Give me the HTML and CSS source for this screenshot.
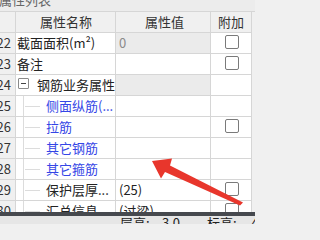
FILE: index.html
```html
<!DOCTYPE html>
<html>
<head>
<meta charset="utf-8">
<link rel="stylesheet" href="styles.css">
</head>
<body>
<div class="page">
  <div class="title"><span class="title-text">属性列表</span></div>
  <div class="grid">
    <div class="row head">
      <div class="c num"></div>
      <div class="c name center">属性名称</div>
      <div class="c val center">属性值</div>
      <div class="c att center">附加</div>
    </div>
    <div class="row">
      <div class="c num">22</div>
      <div class="c name">截面面积(m²)</div>
      <div class="c val ro muted">0</div>
      <div class="c att"><span class="cb"></span></div>
    </div>
    <div class="row">
      <div class="c num">23</div>
      <div class="c name">备注</div>
      <div class="c val"></div>
      <div class="c att"><span class="cb"></span></div>
    </div>
    <div class="row">
      <div class="c num">24</div>
      <div class="c name"><span class="toggle"></span><span class="grp">钢筋业务属性</span></div>
      <div class="c val ro"></div>
      <div class="c att"></div>
    </div>
    <div class="row">
      <div class="c num">25</div>
      <div class="c name"><span class="tree"></span><span class="blue">侧面纵筋(...</span></div>
      <div class="c val"></div>
      <div class="c att"></div>
    </div>
    <div class="row">
      <div class="c num">26</div>
      <div class="c name"><span class="tree"></span><span class="blue">拉筋</span></div>
      <div class="c val"></div>
      <div class="c att"><span class="cb"></span></div>
    </div>
    <div class="row">
      <div class="c num">27</div>
      <div class="c name"><span class="tree"></span><span class="blue">其它钢筋</span></div>
      <div class="c val"></div>
      <div class="c att"></div>
    </div>
    <div class="row">
      <div class="c num">28</div>
      <div class="c name"><span class="tree"></span><span class="blue">其它箍筋</span></div>
      <div class="c val"></div>
      <div class="c att"></div>
    </div>
    <div class="row">
      <div class="c num">29</div>
      <div class="c name"><span class="tree"></span><span>保护层厚...</span></div>
      <div class="c val">(25)</div>
      <div class="c att"><span class="cb"></span></div>
    </div>
    <div class="row">
      <div class="c num">30</div>
      <div class="c name"><span class="tree"></span><span>汇总信息</span></div>
      <div class="c val">(过梁)</div>
      <div class="c att"><span class="cb"></span></div>
    </div>
  </div>
  <div class="status">
    <div class="status-line"></div>
    <div class="status-body">
      <span class="s-label">层高:</span><span class="s-val">3.0</span><span class="s-label s2">标高:</span><span class="s-val s4">-4.2</span>
    </div>
  </div>
  <svg class="arrow" width="255" height="224" viewBox="0 0 255 224">
    <polygon points="152,161 172,158.5 170,165.5 243,202.5 240,205.5 165,172 161,178.5" fill="#e8362c"/>
  </svg>
</div>
</body>
</html>
```

FILE: styles.css
```css
html, body {
  margin: 0;
  padding: 0;
}
body {
  width: 255px;
  height: 224px;
  overflow: hidden;
  background: #f0f0f0;
  font-family: "Noto Sans CJK SC", "Noto Sans", sans-serif;
  font-size: 13px;
  color: #222;
}
.page {
  position: relative;
  width: 255px;
  height: 224px;
  overflow: hidden;
  display: flex;
  flex-direction: column;
}
.title {
  height: 11px;
  overflow: hidden;
  background: #ececec;
  color: #666;
  flex: none;
}
.title-text {
  display: block;
  line-height: 13px;
  margin-top: -7px;
  margin-left: -1px;
}
.grid {
  height: 201px;
  overflow: hidden;
  flex: none;
  margin-left: -5px;
  border-top: 1px solid #d6d6d6;
  box-sizing: border-box;
}
.row {
  display: grid;
  grid-template-columns: 21px 100px 95px 41px;
  height: 21px;
}
.row.head {
  height: 21px;
  background: #f0f0f0;
  color: #333;
}
.c {
  box-sizing: border-box;
  border-right: 1px solid #d6d6d6;
  border-bottom: 1px solid #d6d6d6;
  display: flex;
  align-items: center;
  line-height: 20px;
  white-space: nowrap;
  overflow: hidden;
  background: #fff;
}
.head .c {
  background: #f0f0f0;
}
.c.center {
  justify-content: center;
}
.num {
  background: #f0f0f0;
  justify-content: flex-end;
  padding-right: 4px;
  color: #333;
}
.name {
  padding-left: 1px;
}
.val {
  padding-left: 3px;
}
.ro {
  background: #ebebeb;
}
.muted {
  color: #8a8a8a;
}
.att {
  justify-content: center;
}
.cb {
  display: block;
  width: 12px;
  height: 12px;
  border: 1px solid #7a7a7a;
  border-radius: 2px;
  background: #fff;
  margin-left: 1px;
  margin-top: -2px;
}
.toggle {
  display: block;
  position: relative;
  width: 9px;
  height: 9px;
  border: 1px solid #8a8a8a;
  border-radius: 1px;
  margin-left: 1px;
  margin-top: -3px;
  flex: none;
  background: #fff;
}
.toggle::after {
  content: "";
  position: absolute;
  left: 2px;
  right: 2px;
  top: 4px;
  height: 1px;
  background: #444;
}
.grp {
  margin-left: 8px;
}
.tree {
  display: block;
  flex: none;
  width: 16px;
  height: 21px;
  margin-left: 6px;
  border-left: 1px solid #dcdcdc;
  background: linear-gradient(#dcdcdc, #dcdcdc) no-repeat 1px 10px / 15px 1px;
}
.tree + span {
  margin-left: 6px;
}
.blue {
  color: #3445e6;
}
.status {
  flex: none;
  height: 12px;
  display: flex;
  flex-direction: column;
}
.status-line {
  height: 4px;
  background: #46494e;
  flex: none;
}
.status-body {
  flex: none;
  display: flex;
  height: 20px;
  background: #e6e6e6;
  color: #222;
  line-height: 20px;
  padding-left: 120px;
  white-space: nowrap;
  margin-top: -3px;
  position: relative;
  z-index: -1;
}
.s-label {
  flex: none;
  width: 42px;
}
.s-val {
  flex: none;
  width: 45px;
}
.s2 {
  width: 40px;
}
.s4 {
  width: auto;
}
.arrow {
  position: absolute;
  left: 0;
  top: 0;
}
```
